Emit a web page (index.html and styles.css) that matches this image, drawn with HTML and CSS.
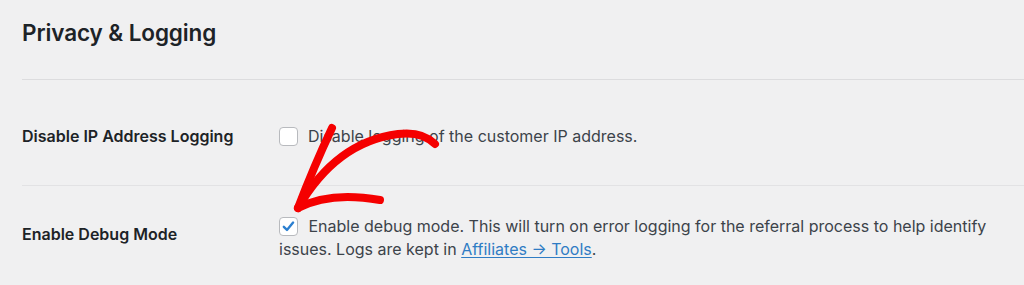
FILE: index.html
```html
<!DOCTYPE html>
<html lang="en">
<head>
<meta charset="utf-8">
<title>Privacy &amp; Logging</title>
<link rel="stylesheet" href="styles.css">
</head>
<body>
<div class="page">
  <header class="section-head">
    <h2 class="section-title">Privacy &amp; Logging</h2>
  </header>
  <div class="form-table">
    <div class="row row-first">
      <div class="label">Disable IP Address Logging</div>
      <div class="field">
        <label class="check-line">
          <span class="checkbox"></span>
          <span>Disable logging of the customer IP address.</span>
        </label>
      </div>
    </div>
    <div class="row row-second">
      <div class="label label-raised">Enable Debug Mode</div>
      <div class="field">
        <p class="check-para"><span class="checkbox checked"><svg viewBox="0 0 20 20" width="17" height="17"><path d="M4.5 10.4 L8.2 14 L15.4 5.4" fill="none" stroke="#2b7fd0" stroke-width="2.8" stroke-linecap="round" stroke-linejoin="round"/></svg></span> Enable debug mode. This will turn on error logging for the referral process to help identify issues. Logs are kept in <a href="#" class="link">Affiliates → Tools</a>.</p>
      </div>
    </div>
  </div>
  <svg class="arrow" width="1024" height="285" viewBox="0 0 1024 285">
    <g fill="none" stroke="#f50000" stroke-width="8" stroke-linecap="round" stroke-linejoin="round">
      <path d="M332 128 Q314 166 298 208"/>
      <path d="M435 144 Q422 131 398 134 Q336 142 298 208"/>
      <path d="M298 208 Q330 191 380 200"/>
    </g>
  </svg>
</div>
</body>
</html>
```
FILE: styles.css
```css
* { box-sizing: border-box; }
html, body { margin: 0; padding: 0; }
body {
  background: #f0f0f1;
  font-family: "Inter", "Liberation Sans", sans-serif;
  color: #3c434a;
  width: 1024px;
  height: 285px;
  overflow: hidden;
}
.page {
  position: relative;
  padding-left: 22px;
  height: 285px;
}
.section-head {
  height: 80px;
  border-bottom: 1px solid #dcdcde;
  padding-top: 19px;
}
.section-title {
  margin: 0;
  font-size: 22.5px;
  font-weight: 600;
  color: #1d2327;
  line-height: 28px;
  letter-spacing: -0.1px;
}
.row {
  display: flex;
  align-items: center;
}
.row-first {
  padding: 45px 0 37px;
  border-bottom: 1px solid #e2e2e4;
}
.row-second {
  padding: 29px 0 20px;
}
.label {
  width: 257px;
  flex: none;
  font-size: 16px;
  font-weight: 600;
  color: #1d2327;
  line-height: 23px;
}
.label-raised {
  margin-top: -8px;
}
.field {
  width: 716px;
  font-size: 16px;
  line-height: 23px;
}
.check-line {
  display: flex;
  align-items: center;
  gap: 10px;
}
.check-para { margin: 0; }
.checkbox {
  display: inline-flex;
  align-items: center;
  justify-content: center;
  width: 19px;
  height: 19px;
  border: 1px solid #b8babe;
  border-radius: 4px;
  background: #fff;
  flex: none;
  vertical-align: -3px;
  margin-right: 6px;
}
.check-line .checkbox { margin-right: 0; }
.link {
  color: #2f7cc4;
  text-decoration: underline;
  text-underline-offset: 2px;
}
.arrow {
  position: absolute;
  left: 0;
  top: 0;
  pointer-events: none;
}
```
